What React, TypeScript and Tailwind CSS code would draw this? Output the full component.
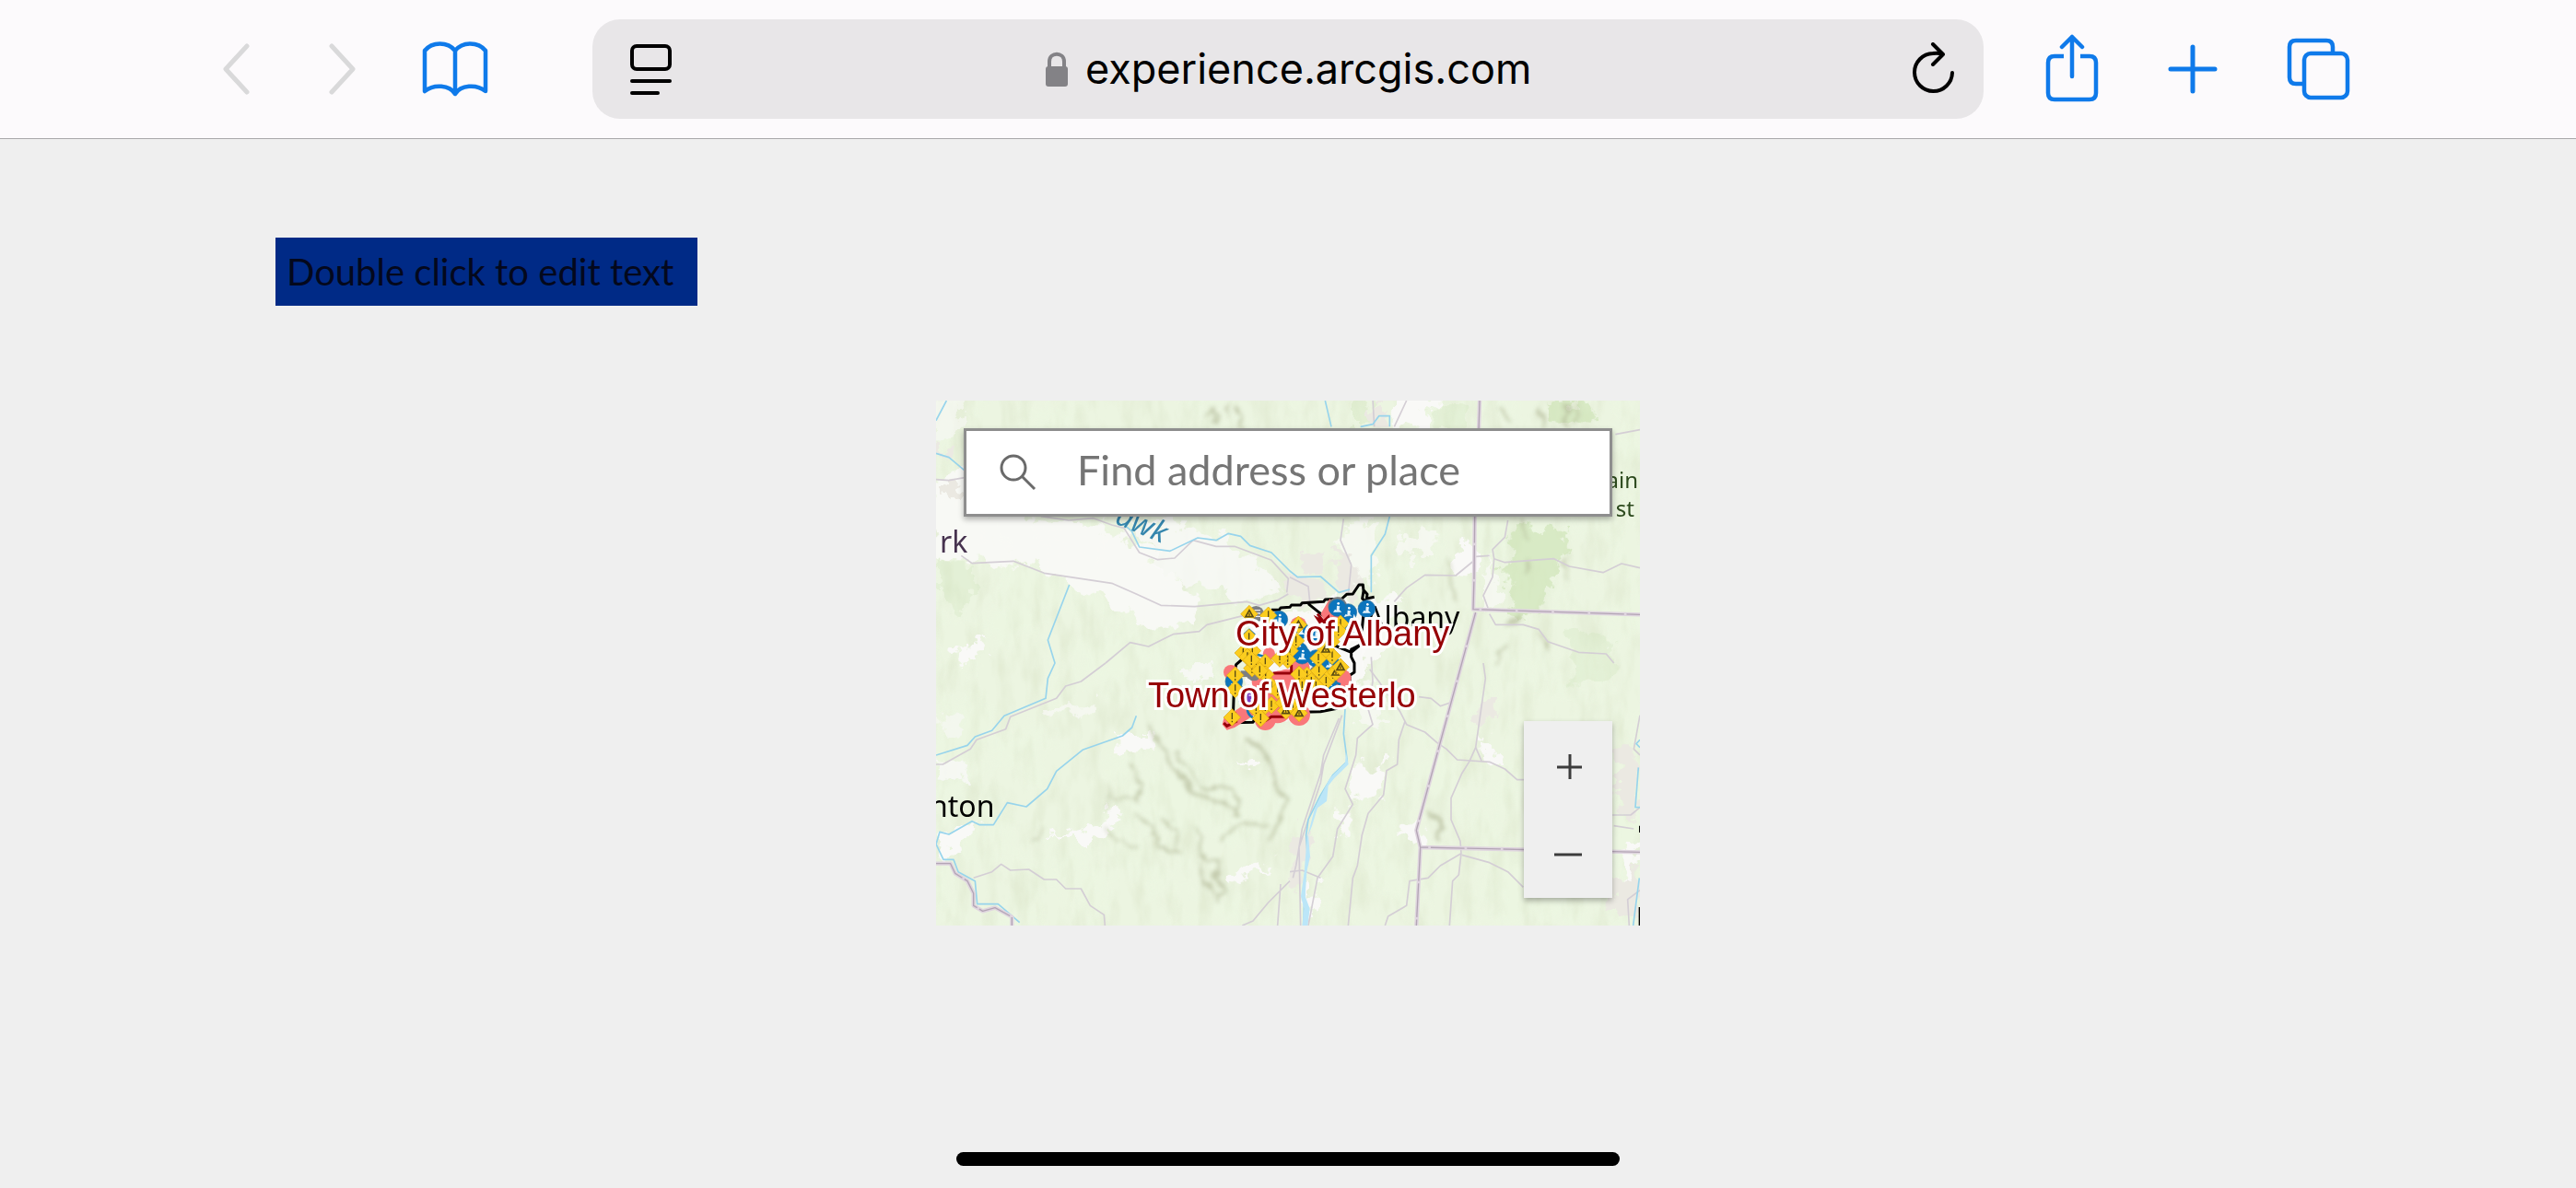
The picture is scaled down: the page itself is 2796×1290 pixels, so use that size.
import React, { useState } from "react";

type Point = [number, number];

// map drawing units are a third of a pixel
const warnings: Point[] = [
  [1130, 745], [1067, 817], [1365, 772], [1220, 827], [1358, 795],
  [1078, 860], [1048, 867], [1200, 860], [1077, 917], [1090, 900],
  [1120, 898], [1193, 890], [1167, 885], [1140, 975], [1121, 937],
  [1022, 940], [1022, 985], [1256, 940], [1230, 937], [1295, 925],
  [1338, 877], [1293, 885], [1318, 960], [1160, 990], [1120, 1040],
  [1090, 1050], [1105, 1080], [1140, 1037], [1012, 1077], [1300, 990],
  [1062, 880], [1102, 925], [1270, 960], [1340, 935], [1285, 975],
  [1240, 975], [1180, 1030], [1075, 890], [1210, 1040], [1335, 830],
];

const hazards: Point[] = [
  [1068, 740], [1228, 775], [1317, 855], [1350, 930], [1365, 913], [1187, 1055], [1230, 1063],
];

const workZones: Point[] = [
  [1390, 735], [1395, 775], [1285, 805], [1230, 860], [1285, 885], [1330, 900],
  [1235, 793], [1165, 758], [1355, 720], [1450, 723], [1240, 875], [1325, 960], [1018, 960],
];

const closures: [number, number, number][] = [
  [1132, 870, 20], [1235, 915, 30], [1008, 930, 24], [1170, 975, 50], [1110, 960, 34],
  [1215, 1000, 50], [1160, 1050, 46], [1228, 775, 26], [1230, 1068, 36], [1120, 1085, 34],
  [1370, 950, 30], [1190, 960, 40], [1140, 1000, 40],
];

const STATE_LINES =
  "M1818 45 1815 140 1802 430 1800 620 1797 725 2340 742M1805 735 1760 900 1612 1445 1625 1500 2340 1516M1625 1500 1612 1755M48 1553H95L110 1585 150 1610 170 1650V1690L200 1708 240 1697 295 1727V1755";

const Warning: React.FC<{ at: Point }> = ({ at }) => (
  <g transform={`translate(${at[0]} ${at[1]})`}>
    <path d="M0-28 28 0 0 28-28 0Z" fill="#fbcd1f" stroke="#d9a512" strokeWidth="2" />
    <path d="M0-15V6M0 11v5" stroke="#594a13" strokeWidth="4" />
  </g>
);

const Hazard: React.FC<{ at: Point }> = ({ at }) => (
  <g transform={`translate(${at[0]} ${at[1]})`}>
    <path d="M0-28 28 0 0 28-28 0Z" fill="#fbcd1f" stroke="#d9a512" strokeWidth="2" />
    <path d="M0-12 12 9H-12Z" fill="none" stroke="#594a13" strokeWidth="5" />
    <path d="M0-3V6" stroke="#594a13" strokeWidth="4" />
  </g>
);

const WorkZone: React.FC<{ at: Point }> = ({ at }) => (
  <g transform={`translate(${at[0]} ${at[1]})`}>
    <circle r="28" fill="#0b75bd" stroke="#2d6f9c" strokeWidth="2" />
    <circle cx="3" cy="-14" r="4" fill="#fff" />
    <path d="M-2-7 8-5 6 6 14 14H-14L-8 5-3 8Z" fill="#e6f3fa" />
  </g>
);

const Basemap: React.FC = () => (
  <svg
    viewBox="48 45 2292 1710"
    preserveAspectRatio="xMidYMid slice"
    className="block w-full h-full"
    fill="none"
    aria-hidden="true"
  >
    <defs>
      <filter id="ragged" x="-5%" y="-5%" width="110%" height="110%">
        <feTurbulence type="fractalNoise" baseFrequency="0.018" numOctaves="4" seed="4" />
        <feDisplacementMap in="SourceGraphic" scale="110" xChannelSelector="R" yChannelSelector="G" />
      </filter>
      <filter id="ridge" x="-10%" y="-10%" width="120%" height="120%">
        <feTurbulence type="fractalNoise" baseFrequency="0.02" numOctaves="3" seed="9" result="n" />
        <feDisplacementMap in="SourceGraphic" in2="n" scale="50" xChannelSelector="R" yChannelSelector="G" />
        <feGaussianBlur stdDeviation="6" />
      </filter>
      <filter id="relief" x="0" y="0" width="100%" height="100%">
        <feTurbulence type="fractalNoise" baseFrequency="0.02 0.007" numOctaves="3" seed="12" />
        <feColorMatrix values="0 0 0 0 0.72  0 0 0 0 0.79  0 0 0 0 0.6  2.6 0 0 0 -1.15" />
      </filter>
      <filter id="woods" x="0" y="0" width="100%" height="100%">
        <feTurbulence type="fractalNoise" baseFrequency="0.005 0.004" numOctaves="4" seed="31" />
        <feColorMatrix values="0 0 0 0 0.84  0 0 0 0 0.93  0 0 0 0 0.76  0 4 0 0 -1.7" />
      </filter>
    </defs>

    <rect x="48" y="45" width="2292" height="1710" fill="#ecf5e1" />
    <rect x="48" y="45" width="2292" height="1710" filter="url(#woods)" opacity="0.7" />

    {/* hillshade */}
    <rect x="48" y="45" width="2292" height="1710" filter="url(#relief)" opacity="0.5" />

    {/* farmland and built-up areas */}
    <g filter="url(#ragged)">
      <g fill="#f9f9f7">
        <path d="M20 300 160 260 220 420 420 430 600 460 760 560 860 640 900 720 880 780 740 790 620 700 480 640 380 580 240 580 120 560 40 560Z" opacity="0.9" />
        <path d="M680 440 820 440 1000 500 1120 600 1180 660 1080 700 880 640 760 580Z" opacity="0.8" />
        <path d="M30 40H130L120 130 30 190Z" opacity="0.6" />
        <path d="M1540 40H1680L1640 150 1530 140Z" />
        <path d="M1370 450 1480 440 1490 620 1450 650 1360 580Z" opacity="0.7" />
        <path d="M1540 500 1660 480 1680 540 1570 560Z" opacity="0.7" />
        <path d="M1740 500 1800 500 1800 600 1760 620Z" />
        <path d="M1830 620 1870 560 1880 700 1830 740Z" opacity="0.7" />
        <path d="M1080 760 1380 700 1440 800 1430 960 1300 1060 1050 1080Z" />
        <path d="M1420 700 1560 690 1520 860 1420 900Z" opacity="0.9" />
        <path d="M1400 980 1480 970 1500 1100 1420 1080Z" opacity="0.7" />
        <path d="M1420 1230 1520 1220 1500 1330 1400 1370 1390 1420Z" />
        <path d="M1360 1390 1400 1390 1400 1470 1360 1460Z" />
        <path d="M1560 1420 1620 1410 1620 1480 1560 1470Z" />
        <path d="M400 1030 580 1030 560 1070 400 1060Z" opacity="0.7" />
        <path d="M640 1140H750V1180H640Z" />
        <path d="M410 1470 560 1430 600 1380 660 1410 560 1470Z" />
        <path d="M60 1440 190 1420 130 1510 70 1520Z" />
        <path d="M50 1220H140V1280H50Z" opacity="0.8" />
        <path d="M870 930 950 900 960 940 890 980Z" opacity="0.8" />
        <path d="M990 1590 1150 1550 1080 1600 1000 1630Z" />
        <path d="M70 1070H130V1130H70Z" opacity="0.6" />
        <path d="M1820 1160 1860 1160 1920 1240 1840 1230Z" />
        <path d="M2290 1500 2340 1480 2320 1620 2280 1610Z" />
        <path d="M1030 1220 1090 1230 1070 1260Z" />
        <path d="M1250 1610 1290 1620 1280 1720 1250 1700Z" />
        <path d="M120 860 210 830 200 870 140 900Z" />
      </g>
      <g fill="#ebe9e2">
        <path d="M1200 620 1290 640 1320 700 1240 710 1190 680Z" />
        <path d="M1250 530H1310V610H1240Z" />
        <path d="M1340 530 1400 540 1420 680 1370 690Z" />
        <path d="M1460 60H1510V140H1460Z" />
        <path d="M70 320 140 330 120 360 60 370Z" />
        <path d="M50 180 100 200 60 230Z" />
        <path d="M1800 1020 1870 1020 1860 1090 1810 1090Z" />
        <path d="M2270 1180 2330 1180 2320 1420 2270 1400Z" />
        <path d="M2250 1620 2340 1560V1720L2260 1730Z" />
        <path d="M1200 1500 1250 1420 1260 1460 1230 1640 1200 1640Z" />
      </g>
      <g fill="#cbe3b3" opacity="0.6">
        <path d="M1920 450 2110 460 2080 580 2060 640 2000 740 1930 770 1900 640Z" />
        <path d="M2020 50H2190L2170 130H2060Z" />
        <path d="M1410 50H1460V130H1410Z" opacity="0.5" />
        <path d="M60 560 170 580 150 740 60 720Z" opacity="0.4" />
        <path d="M2110 800 2260 820 2240 980 2130 960Z" opacity="0.4" />
        <path d="M1680 60 1770 60 1770 130 1670 130Z" opacity="0.4" />
      </g>
    </g>

    <g filter="url(#ridge)" stroke="#aeb492" strokeLinecap="round" opacity="0.6">
      <path d="M740 1110 790 1180 850 1270 880 1330 960 1350 1020 1370 1030 1390" strokeWidth="12" />
      <path d="M1060 1150 1130 1200 1150 1290 1190 1340 1160 1420 1140 1480" strokeWidth="14" />
      <path d="M680 1230 710 1290 700 1350 620 1330M610 1300V1380" strokeWidth="8" />
      <path d="M910 1300 1000 1310 1035 1340 1020 1390M970 1480 1030 1430 1120 1430" strokeWidth="9" />
      <path d="M700 1390 760 1450 780 1500 840 1520M780 1400 830 1440 820 1490" strokeWidth="9" />
      <path d="M900 1440 920 1530 970 1540 950 1600 990 1640 960 1670M920 1550 930 1620 960 1650" strokeWidth="11" />
      <path d="M600 1440 640 1480 700 1500M360 1480 400 1430M820 1180 880 1260 900 1290" strokeWidth="7" />
      <path d="M1650 1390 1690 1420 1685 1470" strokeWidth="12" />
      <path d="M1880 70 1920 110M2020 70V130M2100 60V130M1980 560V600M1960 440 1980 490" strokeWidth="11" />
      <path d="M1915 770 1960 740M2100 560V640M1900 850 1880 900M1720 560 1740 700" strokeWidth="8" />
      <path d="M2130 60V110M2040 850 2010 800" strokeWidth="8" />
      <path d="M930 90 950 70 960 120M1030 70 1050 130M1000 60V100" strokeWidth="8" />
    </g>

    {/* roads */}
    <g stroke="#d4ced5" strokeWidth="5" strokeLinejoin="round">
      <path d="M48 302 90 305 140 296M130 550 165 575 300 568 400 607 620 640 700 675 780 712 890 716 1060 700 1100 712 1160 695 1195 675" />
      <path d="M390 422 480 435 560 428 620 450 660 460 710 540 770 563 825 558 885 500 960 520 1020 520 1140 565 1195 625 1190 670" />
      <path d="M600 900 680 833 740 846 820 806 905 797 930 775 1050 745" />
      <path d="M600 900 520 960 470 975 440 1015 290 1075 275 1115 180 1150 160 1180 70 1230H48" />
      <path d="M1200 620 1260 650 1265 700M1375 430 1365 500 1400 580 1390 680M1470 40 1475 130M1580 45 1540 130" />
      <path d="M1540 700 1580 655 1640 613 1740 615 1795 570M1805 553 1850 550M1910 435 1900 490 1860 530 1865 560 1900 572 2060 560 2110 585 2220 605 2280 576 2340 590" />
      <path d="M1865 560 1860 620 1830 680 1845 720M1850 740 1870 775 1960 775 2010 790 2040 830 2140 865 2230 870 2255 900" />
      <path d="M2260 155 2340 140" />
      <path d="M1360 1080 1310 1200 1300 1260 1240 1440 1220 1560 1210 1600M1370 1070 1310 1230 1300 1290 1230 1500 1235 1755" />
      <path d="M1465 880 1470 960 1455 1050 1470 1100 1420 1145 1415 1200 1380 1310 1405 1360 1355 1440 1340 1530 1290 1600 1260 1755" />
      <path d="M1575 1090 1555 1150 1550 1230 1515 1250 1505 1330 1455 1390 1435 1460 1420 1560 1405 1600 1390 1755" />
      <path d="M1460 920 1490 960 1560 1060 1580 1100 1640 1125 1680 1160 1710 1180 1745 1215 1850 1222 1900 1245 1940 1280H1965" />
      <path d="M1620 1010 1660 1015 1690 1040 1720 1030M1830 900 1837 950 1820 1070 1805 1175 1785 1220 1760 1260 1725 1340V1410L1755 1480 1758 1520 1750 1590 1730 1610 1720 1755" />
      <path d="M1805 1175 1825 1220M1760 1525 1850 1550 1910 1580 1960 1630M1758 1520 1690 1560 1650 1600 1590 1610 1580 1690 1520 1725 1510 1755" />
      <path d="M170 1600 230 1580 260 1555 290 1575 350 1572 400 1605 440 1605 470 1635 520 1635 550 1690 595 1720 598 1755" />
      <path d="M1200 1610 1130 1680 1080 1740 1045 1755M1170 1620 1160 1755M1200 1580 1240 1575 1300 1600" />
      <path d="M2340 1070 2320 1180 2340 1200M2250 1395H2310L2340 1370M2255 1430 2320 1440M2340 1640 2300 1670 2305 1755" />
    </g>

    {/* water */}
    <g stroke="#97d4ec" strokeWidth="5" strokeLinejoin="round">
      <path d="M82 45 48 110M48 217 90 230 140 272M1315 45 1335 130M1430 130 1470 122 1490 95H1525V130" />
      <path d="M655 445 685 470 710 522 810 535 900 492 960 500 1000 478 1040 487 1070 517 1140 540 1200 600 1225 620 1300 618 1360 670 1395 660" />
      <path d="M1525 422 1510 480 1465 550 1465 670" />
      <path d="M482 645 412 825 435 900 412 950 405 1015 270 1072 230 1120 175 1140 150 1168 48 1200" />
      <path d="M700 1072 686 1110 655 1137 525 1183 440 1252 410 1310 342 1368 280 1355 235 1427H190L165 1415 90 1458 60 1450 48 1490 72 1540H105L120 1580 175 1610 182 1685H250L320 1745" />
      <path d="M1380 1050 1375 1130 1387 1220 1340 1265 1300 1330 1260 1410 1253 1460 1258 1540 1248 1600 1245 1755" />
      <path d="M2340 1150 2328 1163 2340 1175M2335 1240 2325 1370H2340M2338 1600 2325 1700 2318 1755" />
    </g>
    <path
      d="M1383 1190 1391 1230 1345 1275 1325 1300 1320 1350 1290 1372 1272 1430 1260 1460 1266 1530 1255 1580 1250 1660 1265 1700 1258 1755H1240L1246 1700 1236 1660 1247 1580 1256 1470 1282 1370 1330 1275 1380 1225Z"
      fill="#bbe6f8"
    />

    {/* state lines */}
    <g strokeLinejoin="round">
      <path d={STATE_LINES} stroke="#dfd5df" strokeWidth="13" />
      <path d={STATE_LINES} stroke="#b3a5b5" strokeWidth="4" strokeDasharray="110 8" />
    </g>
    <path d="M2336 1695H2340V1755H2336ZM2337 1430H2340V1452H2337Z" fill="#000" />
  </svg>
);

const Incidents: React.FC = () => (
  <svg viewBox="48 45 2292 1710" className="absolute inset-0 w-full h-full" fill="none" aria-hidden="true">
    <path
      d="M1140 727 1165 727 1170 720 1200 718 1205 711 1235 711 1240 704 1310 700 1315 693 1370 690 1385 676 1405 675 1425 645 1438 645 1440 665 1436 690 1448 700M1440 662 1452 676 1450 690 1475 685M1260 707 1320 755M1440 740 1430 840 1400 855 1400 880 1410 900V930L1395 940V965L1375 972 1345 960M1340 840 1400 865 1430 840M1065 870 1025 905 1020 930 1015 1080M985 1095 1080 1093 1085 1083 1110 1080 1140 1070M1240 1060 1300 1058 1370 1045"
      stroke="#000"
      strokeWidth="9"
      strokeLinejoin="round"
    />
    <g fill="#f9777a">
      {closures.map(([x, y, r], i) => (
        <circle key={i} cx={x} cy={y} r={r} />
      ))}
      <path d="M1330 690 1300 740 1330 790 1370 740ZM985 1080 1060 1030 1100 1060 1020 1110 995 1118 980 1100Z" />
    </g>
    <path
      d="M1300 770 1290 755 1310 765 1325 750 1330 780M1145 933H1205V905M985 1095 995 1105 1025 1090 1020 1060M1120 1088 1140 1075H1190M1290 740 1330 790"
      stroke="#97000a"
      strokeWidth="9"
    />
    <g fill="#7c7f83">
      <circle cx="1090" cy="740" r="26" />
      <circle cx="1083" cy="930" r="28" />
      <circle cx="1355" cy="716" r="31" />
      <circle cx="1290" cy="935" r="28" />
      <path d="M1040 925H1120V945H1040Z" />
    </g>
    <path d="M1084 728H1104M1084 738H1104M1084 748H1104" stroke="#eee" strokeWidth="4" />
    {workZones.map((at, i) => (
      <WorkZone key={i} at={at} />
    ))}
    <g stroke="#1579b3" strokeWidth="8">
      <path d="M1038 820 1068 792 1098 820M1085 870 1120 880M1000 965 1020 985 1045 975M1270 870 1290 915M1330 900 1360 890M1340 960 1365 970" />
      <circle cx="1068" cy="1015" r="32" />
      <circle cx="1092" cy="1050" r="30" />
    </g>
    {warnings.map((at, i) => (
      <Warning key={i} at={at} />
    ))}
    {hazards.map((at, i) => (
      <Hazard key={i} at={at} />
    ))}
    <circle cx="1075" cy="1015" r="24" fill="#7d3fc0" />
    <path d="M1066 1005H1084V1020H1072" stroke="#e9dcf8" strokeWidth="5" />
  </svg>
);

const Toolbar: React.FC = () => (
  <header className="flex items-center h-[151px] pl-[241px] pr-[243px] bg-[#fcfafc] border-b border-[#a9a8aa] text-[#0f7aea]">
    <button type="button" aria-label="Back" disabled className="mr-[86px] text-[#d9d9da]">
      <svg width="30" height="56" fill="none" stroke="currentColor" strokeWidth="5" strokeLinecap="round" strokeLinejoin="round">
        <path d="M27 3 4 28 27 53" />
      </svg>
    </button>
    <button type="button" aria-label="Forward" disabled className="mr-[70px] text-[#d9d9da]">
      <svg width="30" height="56" fill="none" stroke="currentColor" strokeWidth="5" strokeLinecap="round" strokeLinejoin="round">
        <path d="M3 3 26 28 3 53" />
      </svg>
    </button>
    <button type="button" aria-label="Bookmarks" className="mr-[112px]">
      <svg width="74" height="64" fill="none" stroke="currentColor" strokeWidth="4.5" strokeLinecap="round" strokeLinejoin="round">
        <path d="M37 59C31 49 14 48 4 56V12C12 2 29 2 37 12 45 2 62 2 70 12V56C60 48 43 49 37 59ZM37 12V59" />
      </svg>
    </button>

    <div className="flex flex-1 items-center justify-between h-[108px] pl-[40px] pr-[30px] rounded-[30px] bg-[#e8e6e8] text-black">
      <button type="button" aria-label="Page menu">
        <svg width="46" height="56" fill="none" stroke="currentColor" strokeWidth="4" strokeLinecap="round">
          <rect x="3" y="3" width="41" height="25" rx="5" />
          <path d="M3 41H44M3 54H31" />
        </svg>
      </button>
      <div className="flex items-center gap-[18px]">
        <svg width="26" height="38" className="text-[#838286]" fill="none" stroke="currentColor" strokeWidth="4">
          <path d="M5 18V11C5 0 21 0 21 11V18" />
          <rect x="1" y="16" width="24" height="22" rx="3" fill="currentColor" stroke="none" />
        </svg>
        <input
          type="text"
          readOnly
          aria-label="Address"
          value="experience.arcgis.com"
          className="w-[492px] bg-transparent font-[Inter,sans-serif] text-[45px] leading-[60px] outline-none"
        />
      </div>
      <button type="button" aria-label="Reload">
        <svg width="48" height="58" fill="none" stroke="currentColor" strokeWidth="4" strokeLinecap="round" strokeLinejoin="round">
          <path d="M44 33A20.500 20.500 0 1 1 23 12Q29 11 34 13M23 2 34 13 23 24" />
        </svg>
      </button>
    </div>

    <button type="button" aria-label="Share" className="ml-[66px]">
      <svg width="60" height="76" fill="none" stroke="currentColor" strokeWidth="4.5" strokeLinecap="round" strokeLinejoin="round">
        <path d="M21 24H11Q4 24 4 31V64Q4 71 11 71H49Q56 71 56 64V31Q56 24 49 24H39" strokeLinecap="butt" />
        <path d="M30 3V46M19 14 30 3 41 14" />
      </svg>
    </button>
    <button type="button" aria-label="New tab" className="ml-[74px]">
      <svg width="54" height="54" fill="none" stroke="currentColor" strokeWidth="5" strokeLinecap="round">
        <path d="M27 3V51M3 27H51" />
      </svg>
    </button>
    <button type="button" aria-label="Tabs" className="ml-[74px]">
      <svg width="72" height="70" fill="none" stroke="currentColor" strokeWidth="4.5">
        <path d="M18 51H11Q4 51 4 44V11Q4 4 11 4H44Q51 4 51 11V18" />
        <rect x="20" y="18" width="47" height="48" rx="7" />
      </svg>
    </button>
  </header>
);

const MapWidget: React.FC = () => {
  const [query, setQuery] = useState("");
  const halo =
    "absolute whitespace-nowrap font-['Liberation_Sans',sans-serif] text-[38px] leading-[44px] text-[#960005] [-webkit-text-stroke:6px_white] [paint-order:stroke_fill]";

  return (
    <section
      aria-label="Map"
      className="relative w-[764px] h-[570px] mx-auto mt-[103px] overflow-hidden font-['Noto_Sans',sans-serif]"
    >
      <Basemap />

      <span className="absolute left-[4px] top-[131px] text-[32px] leading-[44px] text-[#47334f]">rk</span>
      <span className="absolute left-[189px] top-[98px] text-[32px] leading-[44px] italic text-[#3586ad] origin-bottom-left rotate-[23deg]">
        awk
      </span>
      <span className="absolute right-[2px] top-[69px] text-[24px] leading-[34px] text-[#2c4a1d]">ain</span>
      <span className="absolute right-[6px] top-[100px] text-[24px] leading-[34px] text-[#2c4a1d]">st</span>
      <span className="absolute left-[-7px] top-[418px] text-[32px] leading-[44px] text-black">nton</span>
      <span className="absolute left-[466px] top-[213px] text-[32px] leading-[44px] text-black">Albany</span>

      <Incidents />

      <span className={`${halo} left-[325px] top-[231px]`}>City of Albany</span>
      <span className={`${halo} left-[230px] top-[298px]`}>Town of Westerlo</span>

      <form
        role="search"
        onSubmit={(e) => e.preventDefault()}
        className="absolute inset-x-[30px] top-[30px] flex items-center h-[96px] pl-[36px] border-[3px] border-[#8e8e8e] bg-white shadow-[0_3px_6px_rgba(0,0,0,0.3)]"
      >
        <svg width="40" height="40" fill="none" stroke="#6a6a6a" strokeWidth="3" aria-hidden="true">
          <circle cx="15" cy="15" r="13" />
          <path d="M24 24 38 38" />
        </svg>
        <input
          type="text"
          aria-label="Find address or place"
          placeholder="Find address or place"
          value={query}
          onChange={(e) => setQuery(e.target.value)}
          className="flex-1 min-w-0 ml-[44px] pb-[6px] bg-transparent font-[Lato,sans-serif] text-[45px] leading-[60px] placeholder:text-[#757575] outline-none"
        />
      </form>

      <div className="absolute right-[30px] bottom-[30px] flex flex-col bg-[#efefef] text-[#3c3c3c] shadow-[0_3px_6px_rgba(0,0,0,0.3)]">
        <button type="button" aria-label="Zoom in" className="flex items-center justify-center size-[96px]">
          <svg width="30" height="30" stroke="currentColor" strokeWidth="3">
            <path d="M17 3V30M3 17H30" />
          </svg>
        </button>
        <button type="button" aria-label="Zoom out" className="flex items-center justify-center size-[96px]">
          <svg width="30" height="30" stroke="currentColor" strokeWidth="3">
            <path d="M0 16H30" />
          </svg>
        </button>
      </div>
    </section>
  );
};

const App: React.FC = () => {
  return (
    <div className="flex flex-col min-h-screen bg-[#efefef]">
      <Toolbar />
      <main className="flex-1 pt-[107px]">
        <p className="w-fit ml-[299px] pl-[12px] pr-[26px] bg-[#002a86] font-[Lato,sans-serif] text-[40px] leading-[74px] text-[#04081c]">
          Double click to edit text
        </p>
        <MapWidget />
      </main>
      <div className="w-[720px] h-[15px] mx-auto mb-[24px] rounded-full bg-black" />
    </div>
  );
};

export default App;
